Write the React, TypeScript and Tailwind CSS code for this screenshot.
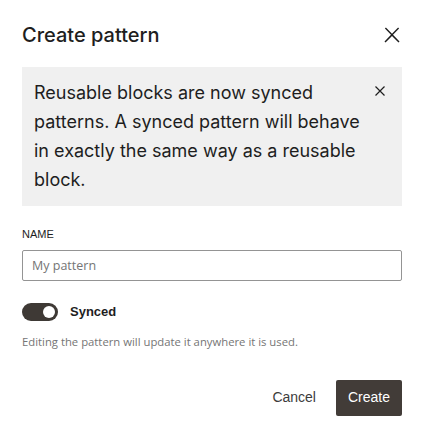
import React, { useState } from 'react';

const CloseIcon = ({ className }: { className?: string }) => (
  <svg viewBox="0 0 24 24" width="24" height="24" className={className} fill="currentColor">
    <path d="M13 11.8l6.1-6.3-1-1-6.1 6.2-6.1-6.2-1 1 6.1 6.3-6.5 6.7 1 1 6.5-6.6 6.5 6.6 1-1z" />
  </svg>
);

const SmallCloseIcon = () => (
  <svg viewBox="0 0 24 24" width="24" height="24" fill="none" stroke="currentColor" strokeWidth="1.2">
    <path d="M7.5 7.5l9 9M16.5 7.5l-9 9" />
  </svg>
);

export default function App() {
  const [name, setName] = useState('');
  const [synced, setSynced] = useState(true);
  const [showNotice, setShowNotice] = useState(true);

  return (
    <div className="w-[422px] h-[437px] bg-white text-[#1e1e1e] font-['Inter',sans-serif]">
      <div className="pl-[22px] pr-[20px]">
        {/* header */}
        <div className="flex items-center justify-between h-[46px] pt-[23px] box-content">
          <h1 className="text-[20px] font-medium leading-none -mt-[22px]">Create pattern</h1>
          <button className="-mr-[2px] -mt-[22px] text-[#1e1e1e]" aria-label="Close">
            <CloseIcon />
          </button>
        </div>

        {showNotice && (
          <div className="mt-[-2px] bg-[#f0f0f0] flex items-start justify-between pl-3 pr-[10px] pt-[11px] pb-[12px]">
            <p className="text-[18px] leading-[29px] text-[#1e1e1e] w-[330px]">
              Reusable blocks are now synced patterns. A synced pattern will behave in exactly the same way as a
              reusable block.
            </p>
            <button className="mt-[1px] text-[#1e1e1e]" onClick={() => setShowNotice(false)} aria-label="Dismiss">
              <SmallCloseIcon />
            </button>
          </div>
        )}

        <form className="mt-[23px]" onSubmit={(e) => e.preventDefault()}>
          <label className="block text-[11px] font-medium uppercase leading-none text-[#1e1e1e] font-['Liberation_Sans',sans-serif] mb-[10px]">
            Name
          </label>
          <input
            className="w-full h-[31px] border border-[#949494] rounded-[2px] px-[9px] text-[12.5px] font-['Open_Sans',sans-serif] placeholder:text-[#757575] outline-none"
            placeholder="My pattern"
            value={name}
            onChange={(e) => setName(e.target.value)}
          />

          <div className="flex items-center gap-3 mt-[21px]">
            <button
              type="button"
              onClick={() => setSynced(!synced)}
              className={
                synced
                  ? 'w-9 h-[18px] rounded-full bg-[#3e3935] flex items-center justify-end pr-[3px]'
                  : 'w-9 h-[18px] rounded-full bg-white border border-[#1e1e1e] flex items-center justify-start pl-[3px]'
              }
              aria-pressed={synced}
            >
              <span className={synced ? 'w-3 h-3 rounded-full bg-white' : 'w-3 h-3 rounded-full bg-[#1e1e1e]'} />
            </button>
            <span className="text-[13px] font-semibold font-['Liberation_Sans',sans-serif]">Synced</span>
          </div>
          <p className="mt-[14px] text-[11.3px] text-[#757575] font-['Open_Sans',sans-serif] leading-none">
            Editing the pattern will update it anywhere it is used.
          </p>

          <div className="flex justify-end items-center gap-2 mt-[33px] font-['Liberation_Sans',sans-serif]">
            <button type="button" className="h-9 px-3 text-[14px] text-[#3c3c3c]">
              Cancel
            </button>
            <button
              type="submit"
              className="h-9 px-3 text-[14px] text-white bg-[#423c38] rounded-[2px]"
            >
              Create
            </button>
          </div>
        </form>
      </div>
    </div>
  );
}
